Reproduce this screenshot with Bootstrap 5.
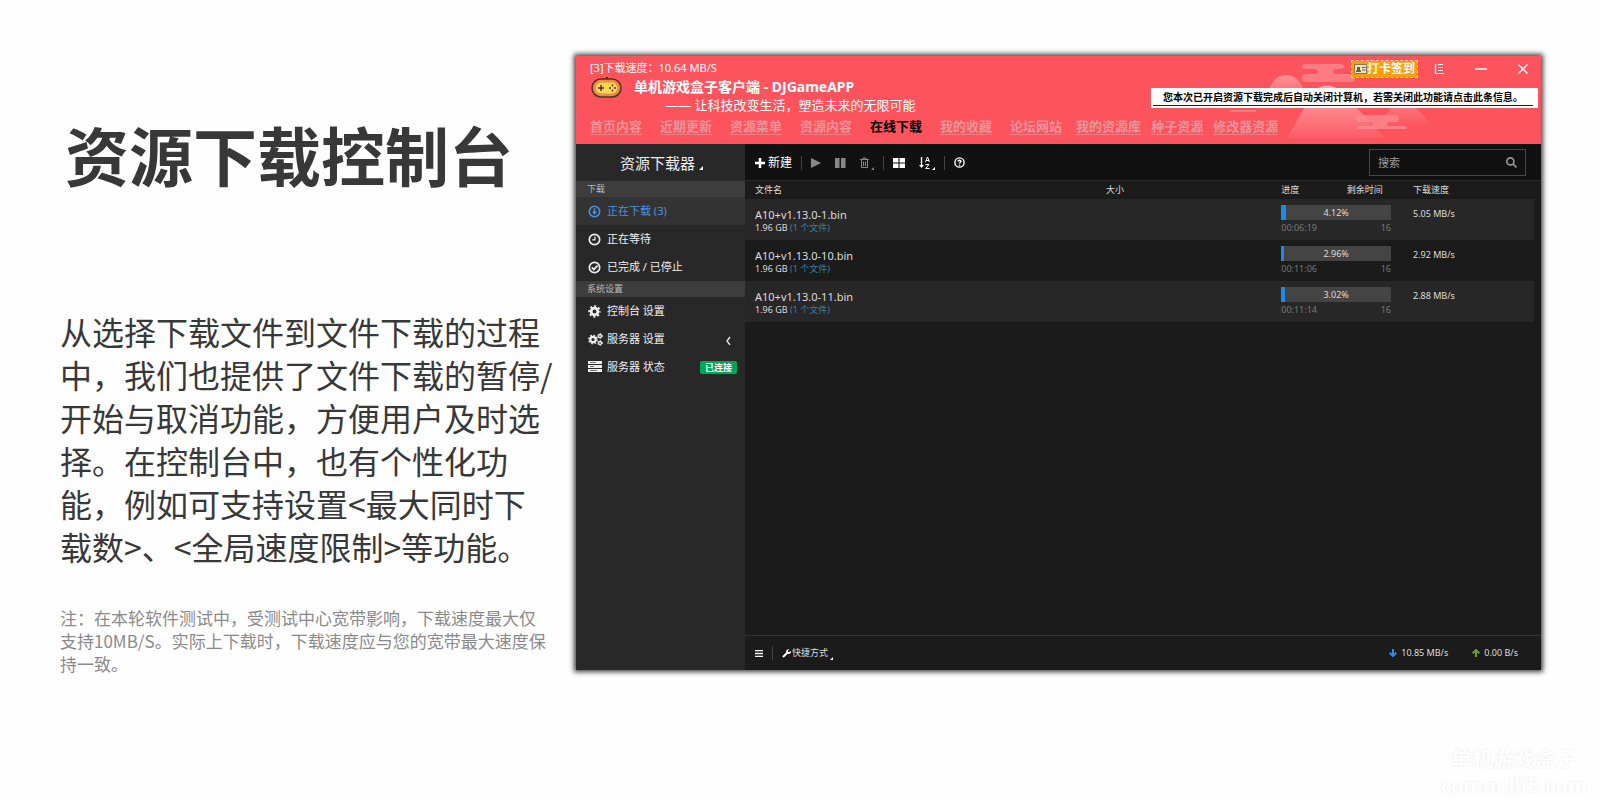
<!DOCTYPE html>
<html lang="zh-CN">
<head>
<meta charset="utf-8">
<meta name="viewport" content="width=device-width, initial-scale=1">
<title>资源下载控制台</title>
<link href="https://cdn.jsdelivr.net/npm/bootstrap@5.3.0/dist/css/bootstrap.min.css" rel="stylesheet">
<style>
body{font-family:"Noto Sans CJK SC",sans-serif;color:#383838;background:#fefefe}
button,input{font-family:inherit}
svg{display:block;flex:none}
.page{padding:56px 59px 0 60px}
/* introduction */
.intro{flex:0 1 516px}
.intro h1{font-size:64px;line-height:78px;font-weight:700;margin:58px 0 118px 5px;color:#383838;white-space:nowrap}
.intro .lead-text{font-size:32px;line-height:43px;max-width:494px;margin-bottom:38px}
.intro .note{font-size:17px;line-height:23px;color:#8a8a8a;max-width:490px;margin:0}
/* application window */
.app{flex:1 1 0;min-width:0;margin-bottom:6px;background:#1b1b1b;color:#ddd;font-family:"Noto Sans","Noto Sans CJK SC",sans-serif;font-size:9px;line-height:12px;box-shadow:0 0 5px 2px rgba(0,0,0,.75)}
.app button{background:none;border:0;padding:0;color:inherit}
.app a{text-decoration:none}
.app-head{background:#fc535d;color:#fff;height:88px;padding:3px 3px 0 14px}
.scenery{right:0;top:0}
.speed{font-size:11px;line-height:18px}
.brand-name{font-size:14px;line-height:20px;font-weight:700}
.slogan{font-size:13px;line-height:17px;padding-left:31px}
.tabs{gap:18px;font-size:13px;line-height:16px;font-weight:700;margin-top:4px}
.tabs .tail{gap:10px;margin-left:-4px}
.tabs a{color:#ec9499;border-bottom:1px solid #e98085}
.tabs a.on{color:#000;border-color:transparent}
.checkin{background:#fd9c06!important;outline:1px dashed #ffd98a;font-size:12px;line-height:16px;font-weight:700;width:65px;white-space:nowrap}
.win-row{margin-top:2px}
.win-tools{gap:31px;margin:0 10px 0 17px}
.notice{background:#fff;color:#000;width:387px;height:20px;margin-top:11px;padding:2px 5px 2px 2px}
.notice a{display:block;color:#000;font-size:10px;font-weight:700;line-height:15px;border-bottom:1px solid #222;text-align:center;white-space:nowrap}
.side{background:#282828;flex:0 0 169px;font-size:11px}
.side-title{height:37px;font-size:15px;color:#eee!important;padding:0 14px 0 16px!important}
.side h2{background:#3d3d3d;font-size:9px;line-height:16px;margin:0;padding-left:11px;color:#bbb;font-weight:400}
.side li a{height:28px;color:#eee;padding:0 8px 0 12px;gap:6px}
.side li a.on{background:#333;color:#4a90e2}
.state{background:#00a65a;border-radius:2px;font-size:9px;line-height:13px;font-weight:700;padding:0 5px;color:#fff}
.bar{background:#111;height:37px;border-bottom:1px solid #2b2b2b;padding:1px 15px 0 10px;font-size:12px;color:#fff}
.bar .dim{color:#888}
.rule{width:1px;height:14px;background:#444;margin:0 9px}
.step{margin-left:14px!important}
.search{border:1px solid #484848;width:157px;height:27px;padding:0 8px}
.search input{background:none;border:0;outline:0;color:#ccc;font-size:11px;min-width:0;padding:0}
.search input::placeholder{color:#999}
.tasks{width:calc(100% - 7px);table-layout:fixed;border-collapse:collapse}
.tasks th,.tasks td{padding:0 0 0 10px;font-weight:400}
.tasks th{height:18px}
.tasks td{height:41px;vertical-align:top}
.tasks tbody tr:nth-child(odd){background:#272727}
.tasks .file{font-size:11px;line-height:14px;margin-top:9px}
.tasks a{color:#3a7fa8}
.tasks td.prog{padding-right:12px}
.tasks .rate{margin-top:9px}
.meter{height:15px;margin-top:6px;background:#444;line-height:15px;text-align:center}
.meter i{left:0;top:0;height:100%;background:#1f8ae6}
.under{color:#777;padding-top:2px}
.foot{border-top:1px solid #333;height:35px;padding:0 23px 0 10px}
.site-mark{height:124px;padding:67px 13px 0 0;color:#fff;font-weight:700;text-shadow:0 0 2px #e4e4e4}
.site-mark div{text-align:center;font-size:21px;line-height:28px}
.site-mark .host{font-size:20px}
</style>
<script src="https://cdn.jsdelivr.net/npm/bootstrap@5.3.0/dist/js/bootstrap.bundle.min.js"></script>
</head>
<body>
<div class="d-flex flex-column min-vh-100">
<main class="page d-flex flex-grow-1">
  <section class="intro">
    <h1>资源下载控制台</h1>
    <p class="lead-text">从选择下载文件到文件下载的过程中，我们也提供了文件下载的暂停/开始与取消功能，方便用户及时选择。在控制台中，也有个性化功能，例如可支持设置&lt;最大同时下载数&gt;、&lt;全局速度限制&gt;等功能。</p>
    <p class="note">注：在本轮软件测试中，受测试中心宽带影响，下载速度最大仅支持10MB/S。实际上下载时，下载速度应与您的宽带最大速度保持一致。</p>
  </section>

  <section class="app d-flex flex-column">
    <header class="app-head position-relative">
      <svg class="scenery position-absolute" width="311" height="88" viewBox="0 0 311 88">
        <defs><linearGradient id="hill" x1="0" y1="0" x2="0" y2="1"><stop offset="0" stop-color="#ffa9ab"/><stop offset="1" stop-color="#ffa9ab" stop-opacity="0.1"/></linearGradient></defs>
        <g fill="#fd7c83">
          <path d="M75 8h36q3 0 3 2.500t-3 2.500h-5q-3 0-3 2.500t3 2.500h15q4 0 4 4t-4 4H75q-3 0-3-4t3-4h10q3 0 3-2.500t-3-2.500H75q-3 0-3-2.500t3-2.500z"/>
          <rect x="0" y="54" width="26" height="2"/>
        </g>
        <path d="M36 46Q40 19 56 19T77 46z" fill="url(#hill)" opacity=".75"/>
        <path d="M150 70Q164 42 172 42t29 27z" fill="url(#hill)" opacity=".5"/>
        <path d="M57 82L85 34q12-9 25 0l45 48z" fill="url(#hill)"/>
        <path d="M130 59h35q4 0 4 3.500t-4 3.500h-5q-3 0-3 4h17q3 0 3 1.500t-3 1.500h-44q-3 0-3-1.500t3-1.500h13q0-4-3-4h-10q-4 0-4-3.500t4-3.500z" fill="#fd8b91" opacity=".8"/>
      </svg>
      <div class="d-flex justify-content-between position-relative">
        <div>
          <div class="speed">[3]下载速度：10.64 MB/S</div>
          <div class="d-flex">
            <svg width="44" height="32" viewBox="0 0 44 32" fill="none"><path d="M17 0v3" stroke="#513226" stroke-width="2"/><rect x="2" y="2" width="29" height="18" rx="9" fill="#f08a3c" stroke="#513226" stroke-width="1.500"/><rect x="6" y="5.500" width="21" height="11" rx="5" fill="#ffd757"/><path d="M8 11h6M11 8v6" stroke="#513226" stroke-width="1.500"/><g fill="#513226"><circle cx="22.500" cy="8.500" r="1"/><circle cx="22.500" cy="13.500" r="1"/><circle cx="20" cy="11" r="1"/><circle cx="25" cy="11" r="1"/></g></svg>
            <div><div class="brand-name">单机游戏盒子客户端 - DJGameAPP</div><div class="slogan">—— 让科技改变生活，塑造未来的无限可能</div></div>
          </div>
        </div>
        <div class="d-flex flex-column align-items-end">
          <div class="win-row d-flex align-items-center">
            <button class="checkin d-flex align-items-center justify-content-center"><svg width="13" height="10" viewBox="0 0 13 10"><path d="M.5.500h12v9H.5z" fill="#eee3bd" stroke="#86784f"/><path d="M2 8V6.500h1V3h3v3.500h1V8zM8 3h3.500v1H8zM8 5.500h3.500v1H8z" fill="#665f4b"/></svg><span>打卡签到</span></button>
            <div class="win-tools d-flex align-items-center">
              <button aria-label="菜单"><svg width="10" height="10" stroke="#fff" fill="none"><path d="M1.500 0v9.500H10M4 .5h5M4 3.500h5M4 6.500h5" stroke-width="1.200"/></svg></button>
              <button aria-label="最小化"><svg width="12" height="10" stroke="#fff"><path d="M0 5h12" stroke-width="1.500"/></svg></button>
              <button aria-label="关闭"><svg width="10" height="10" stroke="#fff"><path d="M.5.500l9 9M9.500.500l-9 9" stroke-width="1.400"/></svg></button>
            </div>
          </div>
          <div class="notice"><a href="#">您本次已开启资源下载完成后自动关闭计算机，若需关闭此功能请点击此条信息。</a></div>
        </div>
      </div>
      <nav class="tabs d-flex position-relative">
        <a href="#">首页内容</a><a href="#">近期更新</a><a href="#">资源菜单</a><a href="#">资源内容</a><a href="#" class="on">在线下载</a><a href="#">我的收藏</a><a href="#">论坛网站</a>
        <div class="tail d-flex"><a href="#">我的资源库</a><a href="#">种子资源</a><a href="#">修改器资源</a></div>
      </nav>
    </header>

    <div class="d-flex flex-grow-1">
      <aside class="side">
        <button class="side-title w-100 d-flex align-items-center justify-content-center gap-1">资源下载器<svg width="4" height="14"><path d="M4 10v4H0z" fill="#fff"/></svg></button>
        <h2>下载</h2>
        <ul class="list-unstyled m-0">
          <li><a href="#" class="on d-flex align-items-center"><svg width="13" height="13" viewBox="0 0 14 14" fill="none" stroke="currentColor" stroke-width="1.700"><circle cx="7" cy="7" r="5.600"/><path d="M7 3.500V8"/><path d="M3.800 7h6.400L7 10.500z" fill="currentColor" stroke="none"/></svg>正在下载 (3)</a></li>
          <li><a href="#" class="d-flex align-items-center"><svg width="13" height="13" viewBox="0 0 14 14" fill="none" stroke="currentColor" stroke-width="1.800"><circle cx="7" cy="7" r="5.600"/><path d="M7.500 3.800v3.700H4.500" stroke-width="1.300"/></svg>正在等待</a></li>
          <li><a href="#" class="d-flex align-items-center"><svg width="13" height="13" viewBox="0 0 14 14" fill="none" stroke="currentColor" stroke-width="1.800"><circle cx="7" cy="7" r="5.600"/><path d="M4 6.800l2.300 2.300L10.300 5"/></svg>已完成 / 已停止</a></li>
        </ul>
        <h2>系统设置</h2>
        <ul class="list-unstyled m-0">
          <li><a href="#" class="d-flex align-items-center"><svg width="13" height="13" viewBox="0 0 14 14" fill="none" stroke="currentColor"><circle cx="7" cy="7" r="3.600" stroke-width="3"/><circle cx="7" cy="7" r="5.600" stroke-width="2.200" stroke-dasharray="2.200 2.198" stroke-dashoffset="1.100"/></svg>控制台 设置</a></li>
          <li><a href="#" class="d-flex align-items-center"><svg width="15" height="13" viewBox="0 0 15 13" fill="none" stroke="currentColor" style="margin-right:-2px"><circle cx="5" cy="6.500" r="2.700" stroke-width="2.200"/><circle cx="5" cy="6.500" r="4.100" stroke-width="1.600" stroke-dasharray="1.610 1.610"/><circle cx="12" cy="3" r="1.500" stroke-width="1.300"/><circle cx="12" cy="3" r="2.400" stroke-dasharray="1.200 1.310"/><circle cx="12" cy="10" r="1.500" stroke-width="1.300"/><circle cx="12" cy="10" r="2.400" stroke-dasharray="1.200 1.310"/></svg>服务器 设置<svg class="ms-auto me-1" width="9" height="12" fill="none" stroke="currentColor" stroke-width="1.300"><path d="M6 4L3 8l3 4"/></svg></a></li>
          <li><a href="#" class="d-flex align-items-center"><svg width="14" height="12" fill="currentColor" style="margin-right:-1px"><path d="M0 0h14v3H0zM0 4h14v3H0zM0 8h14v3H0z"/><path d="M2 1.500h6M2 5.500h4M2 9.500h7" stroke="#777"/></svg>服务器 状态<span class="state ms-auto">已连接</span></a></li>
        </ul>
      </aside>

      <div class="d-flex flex-column flex-grow-1">
        <div class="bar d-flex align-items-center">
          <button class="d-flex align-items-center"><svg width="13" height="10" viewBox="0 0 13 10"><path d="M5 0v10M0 5h10" stroke="#fff" stroke-width="2.600"/></svg>新建</button>
          <span class="rule"></span>
          <button class="dim" aria-label="开始"><svg width="10" height="10" fill="currentColor"><path d="M0 0l10 5-10 5z"/></svg></button>
          <button class="dim step" aria-label="暂停"><svg width="11" height="10" fill="currentColor"><path d="M0 0h4.500v10H0zM6 0h4.500v10H6z"/></svg></button>
          <button class="dim step" aria-label="删除"><svg width="14" height="14" viewBox="0 0 14 14" fill="none" stroke="currentColor"><path d="M0 3.500h9M3 3.500V2h3v1.500M1.500 4v7.500h6V4M3.500 5.500v4.500M5.500 5.500v4.500"/><path d="M14 11v3h-3z" fill="currentColor" stroke="none"/></svg></button>
          <span class="rule"></span>
          <button aria-label="布局"><svg width="12" height="10" viewBox="0 0 11 9" fill="currentColor"><path d="M0 0h5v4H0zM6 0h5v4H6zM0 5h5v4H0zM6 5h5v4H6z"/></svg></button>
          <button class="step" aria-label="排序"><svg width="16" height="14" viewBox="0 0 16 14" fill="none" stroke="currentColor"><path d="M2.500 1v10" stroke-width="1.400"/><path d="M0 9h5l-2.500 3z" fill="currentColor" stroke="none"/><path d="M6.500 6L8.500 1l2 5M7 4.500h3M6.500 8.500H10l-3.300 4H10.500"/><path d="M16 11v3h-3z" fill="currentColor" stroke="none"/></svg></button>
          <span class="rule"></span>
          <button aria-label="帮助"><svg width="11" height="11" viewBox="0 0 11 11" fill="none" stroke="currentColor" stroke-width="1.400"><circle cx="5.500" cy="5.500" r="4.600"/><path d="M4 4.500q0-1.300 1.500-1.300T7 4.500q0 .7-1.500 1.500v.5M5.500 7.500v1.200"/></svg></button>
          <label class="search d-flex align-items-center ms-auto"><input class="flex-grow-1" type="text" placeholder="搜索" aria-label="搜索"><svg width="11" height="11" viewBox="0 0 10 10" fill="none" stroke="#999" stroke-width="1.500"><circle cx="4" cy="4" r="3.200"/><path d="M6.400 6.400L9.500 9.500"/></svg></label>
        </div>
        <table class="tasks">
          <colgroup><col style="width:44.5%"><col style="width:22.2%"><col style="width:8.3%"><col style="width:8.4%"><col></colgroup>
          <thead><tr><th>文件名</th><th>大小</th><th>进度</th><th>剩余时间</th><th>下载速度</th></tr></thead>
          <tbody>
            <tr><td colspan="2"><div class="file">A10+v1.13.0-1.bin</div>1.96 GB <a href="#">(1 个文件)</a></td><td colspan="2" class="prog"><div class="meter position-relative"><i class="position-absolute" style="width:4.12%"></i>4.12%</div><div class="under d-flex justify-content-between"><span>00:06:19</span><span>16</span></div></td><td><div class="rate">5.05 MB/s</div></td></tr>
            <tr><td colspan="2"><div class="file">A10+v1.13.0-10.bin</div>1.96 GB <a href="#">(1 个文件)</a></td><td colspan="2" class="prog"><div class="meter position-relative"><i class="position-absolute" style="width:2.96%"></i>2.96%</div><div class="under d-flex justify-content-between"><span>00:11:06</span><span>16</span></div></td><td><div class="rate">2.92 MB/s</div></td></tr>
            <tr><td colspan="2"><div class="file">A10+v1.13.0-11.bin</div>1.96 GB <a href="#">(1 个文件)</a></td><td colspan="2" class="prog"><div class="meter position-relative"><i class="position-absolute" style="width:3.02%"></i>3.02%</div><div class="under d-flex justify-content-between"><span>00:11:14</span><span>16</span></div></td><td><div class="rate">2.88 MB/s</div></td></tr>
          </tbody>
        </table>
        <footer class="foot mt-auto d-flex align-items-center">
          <button aria-label="列表"><svg width="8" height="7" stroke="#fff"><path d="M0 .5h8M0 3.500h8M0 6.500h8" stroke-width="1.500"/></svg></button>
          <span class="rule"></span>
          <button class="d-flex align-items-center"><svg width="10" height="9" viewBox="0 0 10 9" fill="none"><path d="M1 8l4-4" stroke="#fff" stroke-width="2"/><path d="M7.500 0L6 1.500v1.500h1.500L9 1.700Q9.300 5 6 5 4 4.500 4 3 4.300 0 7.500 0z" fill="#fff"/></svg>快捷方式<svg width="5" height="14"><path d="M5 11v3H2z" fill="#fff"/></svg></button>
          <span class="ms-auto d-flex align-items-center gap-1"><svg width="8" height="8" fill="none" stroke="#3289e8" stroke-width="2"><path d="M4 0v7M.7 3.700L4 7l3.300-3.300"/></svg>10.85 MB/s</span>
          <span class="ms-4 d-flex align-items-center gap-1"><svg width="8" height="8" fill="none" stroke="#6a9e1f" stroke-width="2"><path d="M4 8V1M.7 4.300L4 1l3.300 3.300"/></svg>0.00 B/s</span>
        </footer>
      </div>
    </div>
  </section>
</main>
<div class="site-mark d-flex justify-content-end"><div><div>单机游戏盒子</div><div class="host">comm.lli5.com</div></div></div>
</div>
</body>
</html>
